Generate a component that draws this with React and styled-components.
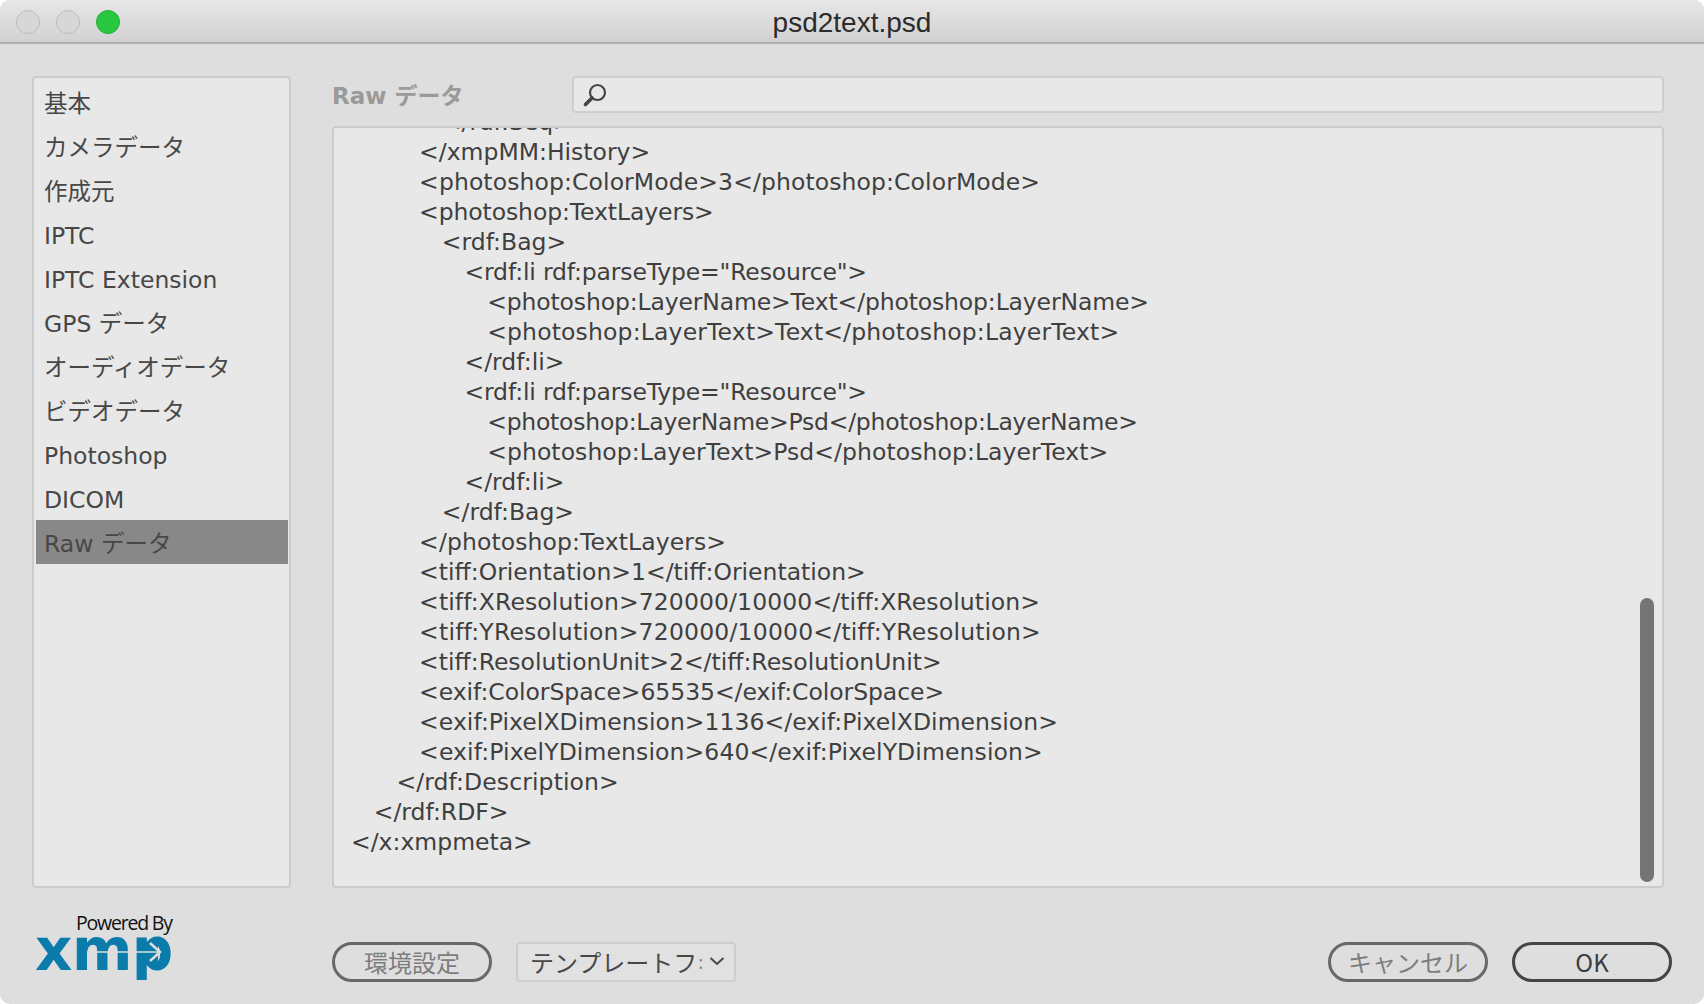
import React from 'react';
import styled, { createGlobalStyle } from 'styled-components';

const UI_FONT = '"DejaVu Sans", "Noto Sans CJK JP", sans-serif';
const JP_FONT = '"Noto Sans CJK JP", "DejaVu Sans", sans-serif';

const GlobalStyle = createGlobalStyle`
  html, body {
    margin: 0;
    padding: 0;
    background: #fff;
  }
`;

const Win = styled.div`
  width: 1704px;
  height: 1004px;
  background: #dedede;
  border-radius: 10px;
  overflow: hidden;
  display: flex;
  flex-direction: column;
  font-family: ${UI_FONT};
  color: #444;
`;

const TitleBar = styled.header`
  flex: 0 0 44px;
  box-sizing: border-box;
  position: relative;
  display: flex;
  align-items: center;
  justify-content: center;
  background: linear-gradient(#e8e7e8, #d2d1d2);
  border-bottom: 2px solid #b2b1b2;
`;

const Lights = styled.div`
  position: absolute;
  left: 16px;
  top: 10px;
  display: flex;
  gap: 16px;
`;

const Light = styled.span`
  width: 24px;
  height: 24px;
  box-sizing: border-box;
  border-radius: 50%;
  background: ${(p) => (p.$on ? '#27c83f' : '#d8d7d8')};
  border: 1px solid ${(p) => (p.$on ? '#20ad34' : '#bdbcbd')};
`;

const WinTitle = styled.h1`
  margin: 0;
  padding-top: 3px;
  font: 400 28px/1 "Liberation Sans", Arial, sans-serif;
  color: #2b2b2b;
`;

const Body = styled.div`
  flex: 1;
  display: grid;
  grid-template-columns: 259px 1fr;
  grid-template-rows: 812px 1fr;
  column-gap: 41px;
  padding: 32px 32px 0 32px;
`;

const Sidebar = styled.nav`
  box-sizing: border-box;
  background: #e8e8e8;
  border: 2px solid #cbcbcb;
  border-radius: 4px;
  padding: 2px 1px 2px 2px;
`;

const NavItem = styled.div`
  height: 44px;
  box-sizing: border-box;
  padding-left: 8px;
  padding-top: ${(p) => (p.$latin ? 3 : 0)}px;
  display: flex;
  align-items: center;
  font-size: 23.5px;
  white-space: nowrap;
  color: #474747;
  background: ${(p) => (p.$active ? '#888888' : 'transparent')};
`;

const Main = styled.section`
  display: flex;
  flex-direction: column;
  gap: 13px;
  padding-right: 8px;
  min-width: 0;
`;

const SearchRow = styled.div`
  flex: 0 0 37px;
  display: flex;
  align-items: center;
`;

const SectionTitle = styled.h2`
  flex: 0 0 240px;
  margin: 0 0 2px;
  font-size: 23px;
  font-weight: 700;
  color: #9a9a9a;
  white-space: nowrap;
`;

const SearchBox = styled.div`
  flex: 1;
  height: 37px;
  box-sizing: border-box;
  background: #e8e8e8;
  border: 2px solid #cfcfcf;
  border-radius: 4px;
  padding-left: 8px;
  display: flex;
  align-items: center;
`;

const RawPanel = styled.div`
  flex: 1;
  position: relative;
  box-sizing: border-box;
  background: #e8e8e8;
  border: 2px solid #cbcbcb;
  border-radius: 4px;
  overflow: hidden;
  padding-left: 17px;
`;

const Code = styled.div`
  margin-top: -21px;
`;

const CodeLine = styled.div`
  height: 30px;
  line-height: 30px;
  padding-left: ${(p) => p.$level * 22.7}px;
  font-size: 23.5px;
  letter-spacing: ${(p) => p.$track || 0}px;
  white-space: nowrap;
  color: #3f3f3f;
`;

const ScrollThumb = styled.div`
  position: absolute;
  right: 8px;
  bottom: 4px;
  width: 14px;
  height: 284px;
  border-radius: 7px;
  background: #757575;
`;

const LogoCell = styled.div`
  padding-top: 23px;
  display: flex;
  flex-direction: column;
`;

const PoweredBy = styled.div`
  font: 400 19.5px/24px "Open Sans", "Liberation Sans", sans-serif;
  letter-spacing: -1.2px;
  color: #111;
  padding-left: 44px;
`;

const LogoMark = styled.div`
  position: relative;
  margin-left: 3px;
  height: 45px;
  width: 136px;
  overflow: hidden;
`;

const LogoText = styled.span`
  display: block;
  font: 700 58px/30px "DejaVu Sans", sans-serif;
  letter-spacing: -0.5px;
  color: #0a7bab;
`;

const LogoArrow = styled.svg`
  position: absolute;
  left: 0;
  top: 0;
`;

const Footer = styled.div`
  padding-top: 54px;
  display: flex;
  gap: 24px;
  align-items: flex-start;
`;

const Pill = styled.button`
  width: 160px;
  height: 40px;
  box-sizing: border-box;
  background: transparent;
  border: 3px solid ${(p) => (p.$primary ? '#444' : '#686868')};
  border-radius: 20px;
  padding: 0;
  font-size: 24px;
  line-height: 1;
  font-family: ${JP_FONT};
  color: ${(p) => (p.$primary ? '#3d3d3d' : '#7d7d7d')};
`;

const Select = styled.div`
  width: 220px;
  height: 40px;
  box-sizing: border-box;
  background: #e1e1e1;
  border: 2px solid #cdcdcd;
  border-radius: 4px;
  padding: 0 0 2px 12px;
  display: flex;
  align-items: center;
  font-family: ${JP_FONT};
  font-size: 24px;
  color: #484848;
  white-space: nowrap;
`;

const SelectColon = styled.span`
  font-size: 18px;
  color: #888;
  margin-left: 1px;
  margin-right: 6px;
`;

const Spacer = styled.div`
  flex: 1;
`;

const NAV = [
  { label: '基本' },
  { label: 'カメラデータ' },
  { label: '作成元' },
  { label: 'IPTC', latin: true },
  { label: 'IPTC Extension', latin: true },
  { label: 'GPS データ' },
  { label: 'オーディオデータ' },
  { label: 'ビデオデータ' },
  { label: 'Photoshop', latin: true },
  { label: 'DICOM', latin: true },
  { label: 'Raw データ', active: true },
];

// level, text, letter-spacing
const LINES = [
  [4, '</rdf:Seq>'],
  [3, '</xmpMM:History>'],
  [3, '<photoshop:ColorMode>3</photoshop:ColorMode>', 0.1],
  [3, '<photoshop:TextLayers>', -0.1],
  [4, '<rdf:Bag>'],
  [5, '<rdf:li rdf:parseType="Resource">', -0.16],
  [6, '<photoshop:LayerName>Text</photoshop:LayerName>', -0.14],
  [6, '<photoshop:LayerText>Text</photoshop:LayerText>', 0.16],
  [5, '</rdf:li>'],
  [5, '<rdf:li rdf:parseType="Resource">', -0.16],
  [6, '<photoshop:LayerName>Psd</photoshop:LayerName>', -0.24],
  [6, '<photoshop:LayerText>Psd</photoshop:LayerText>', 0.07],
  [5, '</rdf:li>'],
  [4, '</rdf:Bag>'],
  [3, '</photoshop:TextLayers>', 0.1],
  [3, '<tiff:Orientation>1</tiff:Orientation>'],
  [3, '<tiff:XResolution>720000/10000</tiff:XResolution>', 0.11],
  [3, '<tiff:YResolution>720000/10000</tiff:YResolution>', 0.2],
  [3, '<tiff:ResolutionUnit>2</tiff:ResolutionUnit>'],
  [3, '<exif:ColorSpace>65535</exif:ColorSpace>', -0.05],
  [3, '<exif:PixelXDimension>1136</exif:PixelXDimension>', 0.04],
  [3, '<exif:PixelYDimension>640</exif:PixelYDimension>', 0.11],
  [2, '</rdf:Description>', 0.1],
  [1, '</rdf:RDF>'],
  [0, '</x:xmpmeta>'],
];

const SearchIcon = () => (
  <svg width="26" height="26" viewBox="0 0 26 26" fill="none" stroke="#454545">
    <circle cx="15.5" cy="10.5" r="7.5" strokeWidth="2.2" />
    <path d="M10 16 L3.5 22.5" strokeWidth="3.6" strokeLinecap="round" />
  </svg>
);

const Chevron = () => (
  <svg width="16" height="10" viewBox="0 0 16 10" fill="none" stroke="#484848" strokeWidth="2">
    <path d="M1.5 2 L8 8 L14.5 2" />
  </svg>
);

export default function App() {
  return (
    <Win>
      <GlobalStyle />
      <TitleBar>
        <Lights>
          <Light />
          <Light />
          <Light $on />
        </Lights>
        <WinTitle>psd2text.psd</WinTitle>
      </TitleBar>
      <Body>
        <Sidebar>
          {NAV.map((item) => (
            <NavItem key={item.label} $active={item.active} $latin={item.latin}>{item.label}</NavItem>
          ))}
        </Sidebar>
        <Main>
          <SearchRow>
            <SectionTitle>Raw データ</SectionTitle>
            <SearchBox><SearchIcon /></SearchBox>
          </SearchRow>
          <RawPanel>
            <Code>
              {LINES.map(([level, text, track], i) => (
                <CodeLine key={i} $level={level} $track={track}>{text}</CodeLine>
              ))}
            </Code>
            <ScrollThumb />
          </RawPanel>
        </Main>
        <LogoCell>
          <PoweredBy>Powered By</PoweredBy>
          <LogoMark>
            <LogoText>xmp</LogoText>
            <LogoArrow width="136" height="45" viewBox="0 0 136 45">
              <rect x="106" y="9" width="17" height="20" fill="#0a7bab" />
              <path d="M52 17 H125" stroke="#dedede" strokeWidth="1.5" />
              <path d="M115 8 L125 17 L115 26" fill="none" stroke="#dedede" strokeWidth="2.5" />
            </LogoArrow>
          </LogoMark>
        </LogoCell>
        <Footer>
          <Pill>環境設定</Pill>
          <Select>
            テンプレートフ<SelectColon>:</SelectColon><Chevron />
          </Select>
          <Spacer />
          <Pill>キャンセル</Pill>
          <Pill $primary>OK</Pill>
        </Footer>
      </Body>
    </Win>
  );
}
